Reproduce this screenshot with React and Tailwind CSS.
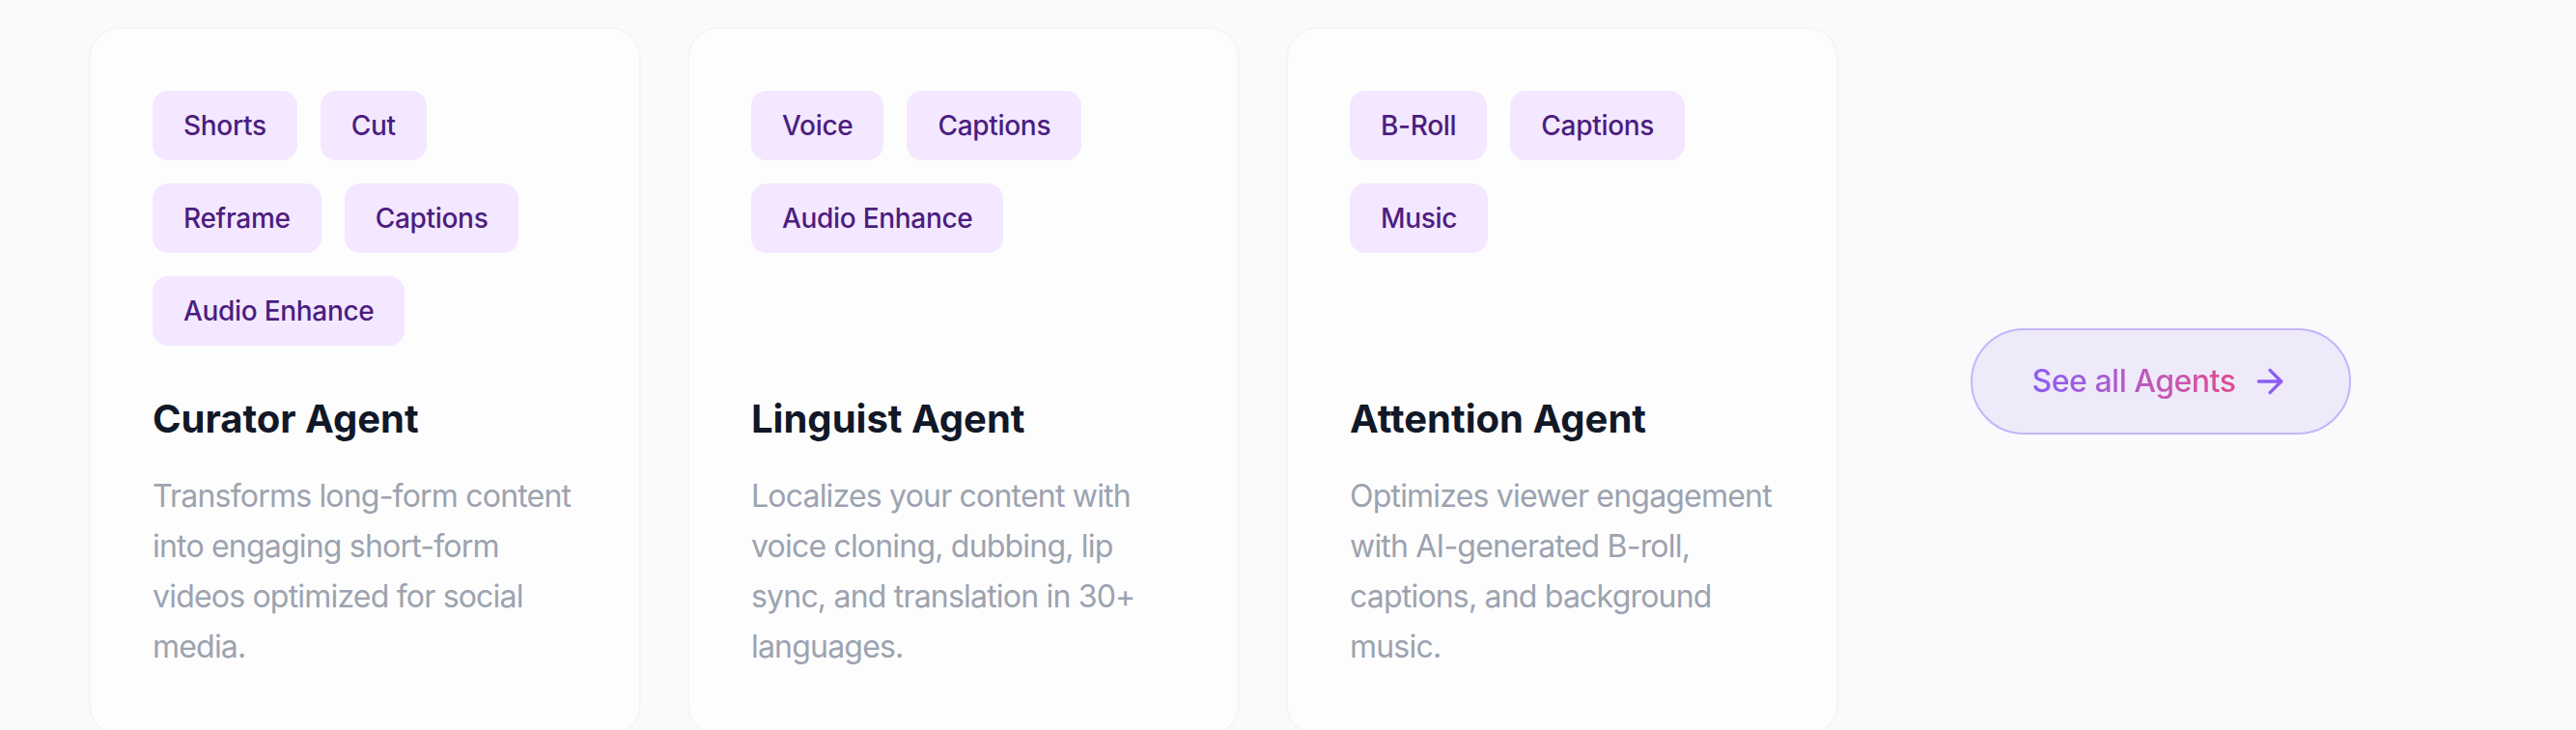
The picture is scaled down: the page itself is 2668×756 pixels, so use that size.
import { ArrowRight } from "lucide-react";

// Datos de las tarjetas de agentes
const agentes = [
  {
    nombre: "Curator Agent",
    etiquetas: ["Shorts", "Cut", "Reframe", "Captions", "Audio Enhance"],
    texto: "Transforms long-form content into engaging short-form videos optimized for social media.",
  },
  {
    nombre: "Linguist Agent",
    etiquetas: ["Voice", "Captions", "Audio Enhance"],
    texto: "Localizes your content with voice cloning, dubbing, lip sync, and translation in 30+ languages.",
  },
  {
    nombre: "Attention Agent",
    etiquetas: ["B-Roll", "Captions", "Music"],
    texto: "Optimizes viewer engagement with AI-generated B-roll, captions, and background music.",
  },
];

function TarjetaAgente({ agente }) {
  return (
    <article className="w-[572px] shrink-0 rounded-[32px] border-2 border-[#f4f5f7] bg-[#fdfdfe] p-[64px]">
      {/* Etiquetas: altura fija para que los titulos queden alineados */}
      <div className="mb-[48px] flex min-h-[264px] flex-wrap content-start gap-[24px]">
        {agente.etiquetas.map((eti) => (
          <span
            key={eti}
            className="rounded-[16px] bg-[#f3e8ff] px-[32px] py-[16px] text-[28px] leading-[40px] font-medium tracking-[-0.3px] text-[#4c1d80]"
          >
            {eti}
          </span>
        ))}
      </div>
      <h3 className="text-[40px] leading-[56px] font-bold text-[#111827]">{agente.nombre}</h3>
      <p className="mt-[26px] text-[32px] leading-[52px] tracking-[-0.8px] text-[#9ca3af]">{agente.texto}</p>
    </article>
  );
}

export default function App() {
  return (
    <div
      className="h-[756px] w-full overflow-hidden bg-[#f9fafb]"
      style={{ fontFamily: "Inter, 'Noto Sans', sans-serif" }}
    >
      <div className="flex gap-[48px] pl-[92px] pt-[28px]">
        {agentes.map((a) => (
          <TarjetaAgente key={a.nombre} agente={a} />
        ))}
        <div className="flex w-[572px] shrink-0 items-center justify-center">
          <button
            type="button"
            className="flex items-center gap-[16px] rounded-full border-2 border-[#c4b5fd] bg-[#eeeaf9] px-[62px] py-[29px]"
          >
            <span className="bg-gradient-to-r from-[#8b5cf6] to-[#e0488f] bg-clip-text text-[32px] leading-[48px] font-medium tracking-[-0.5px] text-transparent">
              See all Agents
            </span>
            <ArrowRight className="h-[40px] w-[40px] text-[#8b5cf6]" strokeWidth={2} />
          </button>
        </div>
      </div>
    </div>
  );
}
